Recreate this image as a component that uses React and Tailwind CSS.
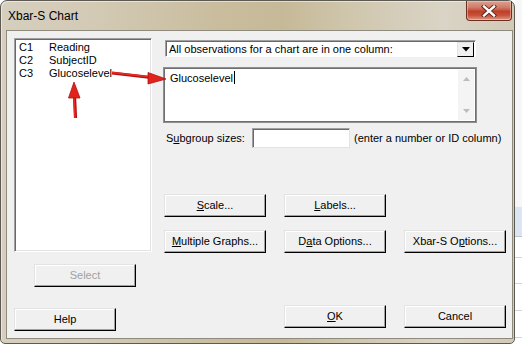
import React from "react";

const columns = [
  { id: "C1", name: "Reading" },
  { id: "C2", name: "SubjectID" },
  { id: "C3", name: "Glucoselevel" },
];

function Btn({ children, className = "", disabled = false }) {
  return (
    <div
      className={`h-[23px] w-[102px] shrink-0 flex items-center justify-center bg-[#f0f0f0] border border-t-[#e3e3e3] border-l-[#e3e3e3] border-r-black border-b-black shadow-[inset_-1px_-1px_0_#a0a0a0,inset_1px_1px_0_#fff] text-[11px] leading-none ${
        disabled ? "text-[#a0a0a0]" : "text-black"
      } ${className}`}
    >
      {children}
    </div>
  );
}

function Arrows() {
  return (
    <svg className="absolute inset-0 pointer-events-none" width="522" height="346" viewBox="0 0 522 346">
      {/* horizontal arrow to the text box */}
      <line x1="112" y1="73" x2="151" y2="77.5" stroke="#b01212" strokeWidth="3" />
      <line x1="112" y1="72.5" x2="151" y2="77" stroke="#ec2a22" strokeWidth="1.6" />
      <polygon points="148,72.5 166,79 148,84" fill="#e2231c" stroke="#b01212" strokeWidth="0.8" />
      {/* vertical arrow up to the column name */}
      <line x1="74.5" y1="96" x2="75.5" y2="118" stroke="#b01212" strokeWidth="3.2" />
      <line x1="74" y1="96" x2="75" y2="118" stroke="#ec2a22" strokeWidth="1.6" />
      <polygon points="68.5,98 74,82 80,98" fill="#e2231c" stroke="#b01212" strokeWidth="0.8" />
    </svg>
  );
}

export default function App() {
  return (
    <div className="relative w-[522px] h-[346px] bg-white flex overflow-hidden font-['Liberation_Sans',Arial,sans-serif]">
      {/* dialog window */}
      <div className="w-[515px] h-[344px] shrink-0 flex flex-col rounded-t-[7px] rounded-b-[5px] border border-[#5c5a52] bg-[linear-gradient(90deg,#d6cfbe_0%,#d3cab5_18%,#c9bd9e_42%,#c6b998_55%,#cfc6ac_68%,#dad4c6_86%,#d2cab7_100%)] shadow-[inset_1px_1px_0_rgba(255,255,255,0.5)]">
        {/* title bar */}
        <div className="h-[30px] flex items-start justify-between pl-[7px] pr-[2px]">
          <span className="mt-[8px] text-[12px] leading-[14px] text-black">Xbar-S Chart</span>
          <div className="w-[46px] h-[20px] flex items-center justify-center rounded-b-[4px] border border-t-0 border-[#6e2e22] bg-[linear-gradient(180deg,#dba293_0%,#d07a66_35%,#c13f29_55%,#c5513a_75%,#dd9a84_100%)] shadow-[inset_0_0_0_1px_rgba(255,220,210,0.45)]">
            <svg width="16" height="12" viewBox="0 0 16 12">
              <path d="M3 1.5 L13 10.5 M13 1.5 L3 10.5" stroke="#5a2018" strokeWidth="4.2" strokeLinecap="square" />
              <path d="M3 1.5 L13 10.5 M13 1.5 L3 10.5" stroke="#ffffff" strokeWidth="2.4" strokeLinecap="square" />
            </svg>
          </div>
        </div>

        {/* client area */}
        <div className="ml-[6px] w-[505px] h-[307px] bg-[#f0f0f0] flex shadow-[0_0_0_1px_#8e8a7e]">
          {/* left column */}
          <div className="w-[156px] shrink-0 flex flex-col pl-[7px] pt-[7px]">
            <div className="w-[138px] h-[214px] bg-white border border-t-[#a0a0a0] border-l-[#a0a0a0] border-r-white border-b-white shadow-[inset_1px_1px_0_#696969,inset_-1px_-1px_0_#e3e3e3] pt-[2px] pl-[4px]">
              {columns.map((c) => (
                <div key={c.id} className="flex h-[13px] items-center text-[11px] leading-none text-black">
                  <span className="w-[30px]">{c.id}</span>
                  <span>{c.name}</span>
                </div>
              ))}
            </div>
            <Btn disabled className="mt-[12px] ml-[20px]">Select</Btn>
            <Btn className="mt-[21px]">Help</Btn>
          </div>

          {/* right column */}
          <div className="flex flex-col">
            {/* combo box */}
            <div className="mt-[9px] ml-[2px] w-[311px] h-[17px] flex bg-white border border-t-[#a0a0a0] border-l-[#a0a0a0] border-r-white border-b-white shadow-[inset_1px_1px_0_#696969]">
              <span className="flex-1 pl-[3px] pt-[2px] text-[11px] leading-[12px] text-black">
                All observations for a chart are in one column:
              </span>
              <div className="w-[17px] h-[15px] mt-[1px] mr-[1px] flex items-center justify-center bg-[#f0f0f0] border border-t-[#e3e3e3] border-l-[#e3e3e3] border-r-black border-b-black">
                <svg width="8" height="5" viewBox="0 0 8 5">
                  <polygon points="0,0 8,0 4,4.5" fill="#000" />
                </svg>
              </div>
            </div>

            {/* variable text box */}
            <div className="mt-[10px] w-[314px] h-[56px] flex bg-white border border-[#8f8f8f] shadow-[inset_0_0_0_1px_#6f6f6f]">
              <div className="flex-1 pl-[6px] pt-[4px] text-[11px] leading-[12px] text-black flex items-start">
                <span>Glucoselevel</span>
                <span className="w-[1px] h-[13px] bg-black ml-[1px] -mt-[1px]" />
              </div>
              <div className="w-[16px] my-[2px] mr-[2px] bg-[#f4f4f4] flex flex-col items-center justify-between py-[7px]">
                <svg width="7" height="4" viewBox="0 0 7 4">
                  <polygon points="0,4 7,4 3.5,0" fill="#bdbdbd" />
                </svg>
                <svg width="7" height="4" viewBox="0 0 7 4">
                  <polygon points="0,0 7,0 3.5,4" fill="#bdbdbd" />
                </svg>
              </div>
            </div>

            {/* subgroup sizes */}
            <div className="mt-[5px] h-[20px] flex items-center text-[11px] leading-none text-black">
              <span className="ml-[3px] w-[86px]">
                S<span className="underline underline-offset-[1px]">u</span>bgroup sizes:
              </span>
              <div className="w-[98px] h-[20px] bg-white border border-t-[#a0a0a0] border-l-[#a0a0a0] border-r-[#e3e3e3] border-b-[#e3e3e3] shadow-[inset_1px_1px_0_#696969]" />
              <span className="ml-[4px]">(enter a number or ID column)</span>
            </div>

            {/* option buttons */}
            <div className="mt-[46px] ml-[1px] flex gap-[18px]">
              <Btn>
                <span className="underline underline-offset-[1px]">S</span>cale...
              </Btn>
              <Btn>
                <span className="underline underline-offset-[1px]">L</span>abels...
              </Btn>
            </div>
            <div className="mt-[13px] ml-[1px] flex gap-[18px]">
              <Btn>
                <span className="underline underline-offset-[1px]">M</span>ultiple Graphs...
              </Btn>
              <Btn>
                D<span className="underline underline-offset-[1px]">a</span>ta Options...
              </Btn>
              <Btn>
                Xbar-S O<span className="underline underline-offset-[1px]">p</span>tions...
              </Btn>
            </div>

            <div className="mt-[52px] ml-[121px] flex gap-[18px]">
              <Btn>
                <span className="underline underline-offset-[1px]">O</span>K
              </Btn>
              <Btn>Cancel</Btn>
            </div>
          </div>
        </div>
      </div>

      {/* worksheet peeking out on the right */}
      <div className="flex-1 flex flex-col bg-white">
        <div className="h-[207px] bg-[#f7f7f7]" />
        <div className="h-[30px] bg-[#dce6f2] border-b border-[#b8c4d4]" />
        <div className="h-[21px] border-b border-[#d4d4d4]" />
        <div className="h-[26px] border-b border-[#d4d4d4]" />
        <div className="h-[27px] border-b border-[#d4d4d4]" />
        <div className="h-[27px] border-b border-[#d4d4d4]" />
      </div>

      <Arrows />
    </div>
  );
}
